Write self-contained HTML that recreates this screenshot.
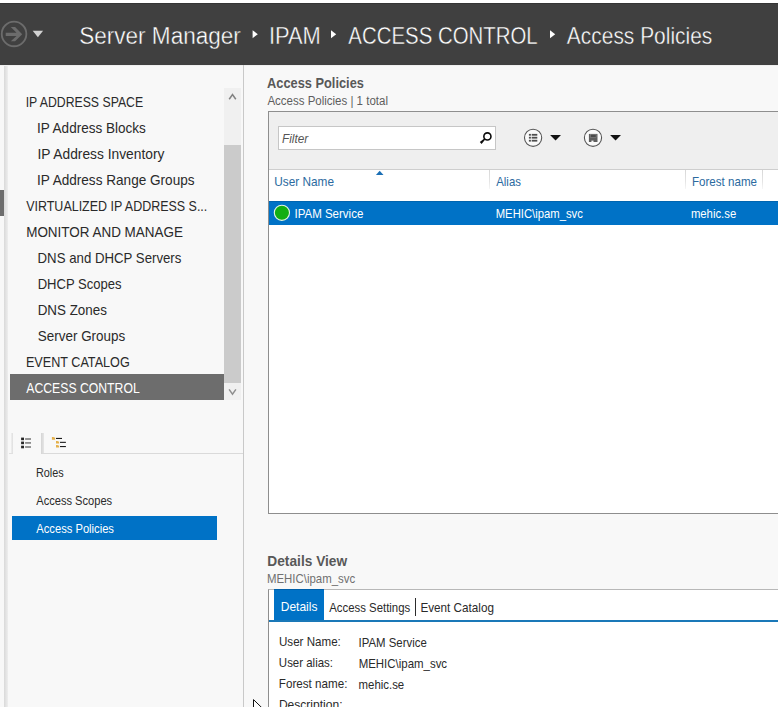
<!DOCTYPE html>
<html><head><meta charset="utf-8"><title>Server Manager - IPAM - Access Policies</title>
<style>
html,body{margin:0;padding:0;background:#ffffff;}
body{width:778px;height:707px;overflow:hidden;font-family:"Liberation Sans",sans-serif;}
#root{position:relative;width:778px;height:707px;overflow:hidden;background:#f8f8f8;}
.t{position:absolute;white-space:pre;transform-origin:0 0;font-family:"Liberation Sans",sans-serif;}
.b{position:absolute;}
svg{position:absolute;overflow:visible;}

</style></head>
<body>
<div id="root">
<!-- top white strip + title bar -->
<div class="b" style="left:0;top:0;width:778px;height:3px;background:#ffffff"></div>
<div class="b" style="left:0;top:3px;width:778px;height:62px;background:#404040"></div>
<div class="b" style="left:0;top:3px;width:778px;height:1px;background:#353535"></div>
<div class="b" style="left:0;top:65px;width:778px;height:1px;background:#efefef"></div>
<!-- nav forward button (disabled) + dropdown -->
<svg style="left:0;top:20px" width="50" height="30" viewBox="0 20 50 30">
  <circle cx="14.05" cy="33.95" r="12.3" fill="none" stroke="#6c6c6c" stroke-width="1.8"/>
  <path d="M5.7 32.8 H16.5 L10.8 27 H15.1 L22.2 34.3 L15.1 41.2 H10.8 L16.5 35.9 H5.7 Z" fill="#6c6c6c"/>
  <path d="M32.7 30.8 H43.1 L37.9 37.2 Z" fill="#d2d2d2"/>
</svg>
<!-- breadcrumb arrows -->
<svg style="left:250px;top:28px" width="310" height="12" viewBox="250 28 310 12">
  <path d="M252.6 30.2 L257.8 34.2 L252.6 38.2 Z" fill="#ffffff"/>
  <path d="M331 30.2 L336.2 34.2 L331 38.2 Z" fill="#ffffff"/>
  <path d="M550 30.2 L555.2 34.2 L550 38.2 Z" fill="#ffffff"/>
</svg>

<!-- left edge strip -->
<div class="b" style="left:4px;top:66px;width:4px;height:641px;background:linear-gradient(90deg,#d9d9d9,#eeeeee)"></div>
<div class="b" style="left:0;top:190px;width:4px;height:26px;background:#6d6d6d"></div>

<!-- sidebar right border -->
<div class="b" style="left:243px;top:65px;width:1px;height:642px;background:#c9c9c9"></div>

<!-- nav scrollbar -->
<div class="b" style="left:224px;top:88px;width:17px;height:312px;background:#f0f0f0"></div>
<div class="b" style="left:224px;top:145px;width:17px;height:238px;background:#cbcbcb"></div>
<svg style="left:224px;top:88px" width="17" height="312" viewBox="0 0 17 312">
  <path d="M5.2 11.2 L8.5 6.6 L11.8 11.2" fill="none" stroke="#828282" stroke-width="1.5"/>
  <path d="M5.1 301.4 L8.5 306.1 L11.9 301.4" fill="none" stroke="#8e8e8e" stroke-width="1.5"/>
</svg>
<!-- selected nav item -->
<div class="b" style="left:10px;top:374px;width:214px;height:26px;background:#6d6d6d"></div>

<!-- tab strip (list / tree) -->
<div class="b" style="left:11px;top:433px;width:2px;height:21px;background:linear-gradient(90deg,#f0f0f0,#dedede)"></div>
<div class="b" style="left:9px;top:453px;width:4px;height:1px;background:#e0e0e0"></div>
<div class="b" style="left:41px;top:433px;width:3px;height:21px;background:linear-gradient(90deg,#d4d4d4,#e6e6e6)"></div>
<div class="b" style="left:42px;top:453px;width:201px;height:1px;background:#dadada"></div>
<svg style="left:20px;top:436px" width="50" height="14" viewBox="20 436 50 14">
  <!-- list icon -->
  <rect x="21.1" y="437.6" width="2.9" height="2.6" fill="#262626"/>
  <rect x="21.1" y="441.6" width="2.9" height="2.6" fill="#262626"/>
  <rect x="21.1" y="445.7" width="2.9" height="2.6" fill="#262626"/>
  <rect x="25.1" y="438.1" width="5.9" height="1.8" fill="#8a8a8a"/>
  <rect x="25.1" y="442.0" width="5.9" height="1.8" fill="#8a8a8a"/>
  <rect x="25.1" y="446.1" width="5.9" height="1.8" fill="#8a8a8a"/>
  <!-- tree icon -->
  <path d="M51.9 436.9 H53.4 L54 437.5 H55.1 V439.7 H51.9 Z" fill="#e4b04a"/>
  <rect x="56" y="437.9" width="6" height="1.1" fill="#1c1c1c"/>
  <path d="M56 440.9 H57.5 L58.1 441.5 H59.1 V443.5 H56 Z" fill="#e4b04a"/>
  <rect x="60" y="441.8" width="5.9" height="1.1" fill="#1c1c1c"/>
  <path d="M56 445 H57.5 L58.1 445.6 H59.1 V447.6 H56 Z" fill="#e4b04a"/>
  <rect x="60" y="446" width="5.9" height="1.1" fill="#1c1c1c"/>
</svg>
<!-- selected sub item -->
<div class="b" style="left:12px;top:516px;width:205px;height:24px;background:#0072c6"></div>

<!-- main list panel -->
<div class="b" style="left:268px;top:111px;width:520px;height:403px;background:#ffffff;border:1px solid #8e8e8e;box-sizing:border-box"></div>
<div class="b" style="left:269px;top:112px;width:509px;height:57px;background:#efefef"></div>
<div class="b" style="left:269px;top:169px;width:509px;height:1px;background:#cecece"></div>
<!-- filter box -->
<div class="b" style="left:278px;top:126px;width:218px;height:24px;background:#ffffff;border:1px solid #c6c6c6;box-sizing:border-box"></div>
<svg style="left:478px;top:130px" width="16" height="16" viewBox="478 130 16 16">
  <circle cx="487.4" cy="136.4" r="3.55" fill="none" stroke="#0c0c0c" stroke-width="1.6"/>
  <path d="M485.2 139.5 L481.6 144 L479.8 142.1 L484.3 138.5 Z" fill="#0c0c0c"/>
</svg>
<!-- toolbar round buttons -->
<svg style="left:520px;top:126px" width="110" height="24" viewBox="520 126 110 24">
  <circle cx="533.1" cy="137.8" r="8.6" fill="#fafafa" stroke="#555555" stroke-width="1.1"/>
  <g fill="#4e4e4e">
    <rect x="528.9" y="133.9" width="2" height="1.8"/><rect x="531.7" y="133.9" width="5.6" height="1.8"/>
    <rect x="528.9" y="136.8" width="2" height="1.8"/><rect x="531.7" y="136.8" width="5.6" height="1.8"/>
    <rect x="528.9" y="139.8" width="2" height="1.8"/><rect x="531.7" y="139.8" width="5.6" height="1.8"/>
  </g>
  <path d="M550.1 135 H561 L555.55 140.4 Z" fill="#111"/>
  <circle cx="593" cy="137.8" r="8.6" fill="#fafafa" stroke="#555555" stroke-width="1.1"/>
  <path d="M588.9 133.9 H597.5 V142 H588.9 Z" fill="#5e5e5e"/>
  <rect x="590.3" y="134.3" width="5.8" height="3" fill="#4a4a4a" stroke="#8e8e8e" stroke-width="0.5"/>
  <rect x="591.4" y="140.6" width="2.1" height="1.4" fill="#f4f4f4"/>
  <path d="M610.1 135 H621 L615.55 140.4 Z" fill="#111"/>
</svg>
<!-- column header separators + sort arrow -->
<div class="b" style="left:489px;top:170px;width:1px;height:19px;background:linear-gradient(180deg,#d8d8d8,#e4e4e4 60%,#f6f6f6)"></div>
<div class="b" style="left:685px;top:170px;width:1px;height:19px;background:linear-gradient(180deg,#d8d8d8,#e4e4e4 60%,#f6f6f6)"></div>
<div class="b" style="left:762px;top:170px;width:1px;height:19px;background:linear-gradient(180deg,#d8d8d8,#e4e4e4 60%,#f6f6f6)"></div>
<svg style="left:374px;top:170px" width="12" height="6" viewBox="374 170 12 6">
  <path d="M375.9 174.9 L379.7 170.8 L383.5 174.9 Z" fill="#1b6fb5"/>
</svg>
<!-- selected row -->
<div class="b" style="left:269px;top:201px;width:509px;height:24px;background:#0072c6"></div>
<div class="b" style="left:269px;top:201px;width:509px;height:1px;background:#0065b0"></div>
<svg style="left:272px;top:203px" width="20" height="20" viewBox="272 203 20 20">
  <circle cx="281.9" cy="212.8" r="7.6" fill="#12ae12" stroke="#e4f4e4" stroke-width="1.1"/>
</svg>

<!-- details panel -->
<div class="b" style="left:268px;top:589px;width:520px;height:130px;background:#ffffff;border:1px solid #8e8e8e;border-top-color:#b8b8b8;box-sizing:border-box"></div>
<div class="b" style="left:274px;top:589px;width:50px;height:32px;background:#0072c6"></div>
<div class="b" style="left:274px;top:589px;width:50px;height:1px;background:#005fa8"></div>
<div class="b" style="left:269px;top:620px;width:509px;height:2px;background:#1a78b8"></div>
<div class="b" style="left:415px;top:598px;width:1px;height:18px;background:#2c2c2c"></div>

<!-- mouse cursor fragment -->
<svg style="left:250px;top:694px" width="18" height="14" viewBox="250 694 18 14">
  <path d="M255.5 701.5 L266 712 L257 712 Z" fill="#000" opacity="0.10"/>
  <path d="M253.5 699.6 L253.5 714 L257 710.6 L259.4 716 L261.6 715 L259.2 709.8 L263.8 709.6 Z" fill="#ffffff" stroke="#111" stroke-width="1"/>
</svg>

<svg class="txt" width="778" height="740" viewBox="0 0 778 740" font-family="Liberation Sans, sans-serif" style="left:0;top:0" xml:space="preserve">
<text transform="translate(79.19,44) scale(0.9812,1)" font-size="23" fill="#ffffff" stroke="#404040" stroke-width="0.38">Server Manager</text>
<text transform="translate(268.90,44) scale(0.9517,1)" font-size="23" fill="#ffffff" stroke="#404040" stroke-width="0.38">IPAM</text>
<text transform="translate(348.34,44) scale(0.8878,1)" font-size="23" fill="#ffffff" stroke="#404040" stroke-width="0.38">ACCESS CONTROL</text>
<text transform="translate(566.83,44) scale(0.9109,1)" font-size="23" fill="#ffffff" stroke="#404040" stroke-width="0.38">Access Policies</text>
<text transform="translate(25.64,107) scale(0.8768,1)" font-size="14" fill="#2a2a2a">IP ADDRESS SPACE</text>
<text transform="translate(37.04,133) scale(0.9672,1)" font-size="14" fill="#2a2a2a">IP Address Blocks</text>
<text transform="translate(37.54,159) scale(0.9852,1)" font-size="14" fill="#2a2a2a">IP Address Inventory</text>
<text transform="translate(37.04,185) scale(0.9710,1)" font-size="14" fill="#2a2a2a">IP Address Range Groups</text>
<text transform="translate(26.20,211) scale(0.8913,1)" font-size="14" fill="#2a2a2a">VIRTUALIZED IP ADDRESS S...</text>
<text transform="translate(26.20,237) scale(0.9623,1)" font-size="14" fill="#2a2a2a">MONITOR AND MANAGE</text>
<text transform="translate(37.57,263) scale(0.9458,1)" font-size="14" fill="#2a2a2a">DNS and DHCP Servers</text>
<text transform="translate(37.64,289) scale(0.9324,1)" font-size="14" fill="#2a2a2a">DHCP Scopes</text>
<text transform="translate(37.68,315) scale(0.9575,1)" font-size="14" fill="#2a2a2a">DNS Zones</text>
<text transform="translate(37.82,341) scale(0.9603,1)" font-size="14" fill="#2a2a2a">Server Groups</text>
<text transform="translate(25.89,367) scale(0.9021,1)" font-size="14" fill="#2a2a2a">EVENT CATALOG</text>
<text transform="translate(26.23,393) scale(0.8745,1)" font-size="14" fill="#ffffff">ACCESS CONTROL</text>
<text transform="translate(35.94,477) scale(0.9063,1)" font-size="12" fill="#2a2a2a">Roles</text>
<text transform="translate(36.26,505) scale(0.9257,1)" font-size="12" fill="#2a2a2a">Access Scopes</text>
<text transform="translate(36.26,533) scale(0.9331,1)" font-size="12" fill="#ffffff">Access Policies</text>
<text transform="translate(267.11,88) scale(0.9152,1)" font-size="14" fill="#585858" font-weight="700">Access Policies</text>
<text transform="translate(267.38,105) scale(0.9583,1)" font-size="12" fill="#5e5e5e">Access Policies | 1 total</text>
<text transform="translate(281.91,143) scale(0.9878,1)" font-size="12" fill="#555555" font-style="italic">Filter</text>
<text transform="translate(274.28,186) scale(0.9846,1)" font-size="12" fill="#2b6aa0">User Name</text>
<text transform="translate(496.23,186) scale(0.9496,1)" font-size="12" fill="#2b6aa0">Alias</text>
<text transform="translate(691.94,186) scale(0.9667,1)" font-size="12" fill="#2b6aa0">Forest name</text>
<text transform="translate(294.46,218) scale(0.9601,1)" font-size="12" fill="#ffffff">IPAM Service</text>
<text transform="translate(495.72,218) scale(0.9416,1)" font-size="12" fill="#ffffff">MEHIC\ipam_svc</text>
<text transform="translate(690.90,218) scale(0.9441,1)" font-size="12" fill="#ffffff">mehic.se</text>
<text transform="translate(267.33,566) scale(0.9804,1)" font-size="14" fill="#585858" font-weight="700">Details View</text>
<text transform="translate(266.91,583) scale(0.9537,1)" font-size="12" fill="#707070">MEHIC\ipam_svc</text>
<text transform="translate(280.78,611) scale(0.9997,1)" font-size="12" fill="#ffffff">Details</text>
<text transform="translate(329.22,612) scale(0.9503,1)" font-size="12" fill="#2a2a2a">Access Settings</text>
<text transform="translate(420.42,612) scale(0.9761,1)" font-size="12" fill="#2a2a2a">Event Catalog</text>
<text transform="translate(279.00,646) scale(0.9664,1)" font-size="12" fill="#2a2a2a">User Name:</text>
<text transform="translate(358.47,647) scale(0.9516,1)" font-size="12" fill="#2a2a2a">IPAM Service</text>
<text transform="translate(278.86,667) scale(0.9560,1)" font-size="12" fill="#2a2a2a">User alias:</text>
<text transform="translate(358.65,668) scale(0.9559,1)" font-size="12" fill="#2a2a2a">MEHIC\ipam_svc</text>
<text transform="translate(278.83,688) scale(0.9714,1)" font-size="12" fill="#2a2a2a">Forest name:</text>
<text transform="translate(358.60,689) scale(0.9508,1)" font-size="12" fill="#2a2a2a">mehic.se</text>
<text transform="translate(278.89,709) scale(1.0057,1)" font-size="12" fill="#2a2a2a">Description:</text>
</svg>
</div>
</body></html>
